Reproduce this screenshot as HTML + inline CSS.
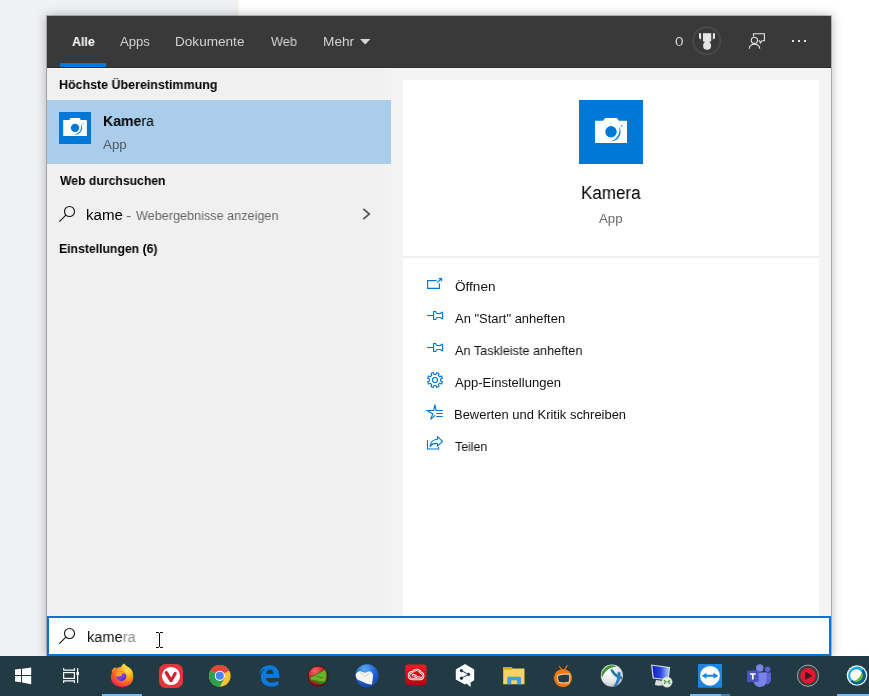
<!DOCTYPE html>
<html lang="de">
<head>
<meta charset="utf-8">
<title>Suche - kamera</title>
<style>
html,body{margin:0;padding:0;}
body{width:869px;height:696px;overflow:hidden;position:relative;background:#ffffff;font-family:"Liberation Sans",sans-serif;color:#000;}
.abs{position:absolute;}
.t{position:absolute;transform-origin:0 50%;will-change:transform;white-space:nowrap;line-height:20px;height:20px;}
#bgleft{left:0;top:0;width:239px;height:656px;background:#f0f1f3;}
#bgline{left:238px;top:0;width:1px;height:16px;background:#f8f8f9;}
#shadow{left:47px;top:16px;width:784px;height:640px;box-shadow:0 0 0 1px rgba(0,0,0,0.22),0 0 10px 1px rgba(0,0,0,0.26);}
#panel{left:47px;top:16px;width:784px;height:600px;background:#f4f4f4;}
#header{left:47px;top:16px;width:784px;height:51px;background:#393939;}
#hline{left:47px;top:67px;width:784px;height:1px;background:#2b2b2b;}
#hline2{left:47px;top:68px;width:784px;height:1px;background:#fafafa;}
#underline{left:60px;top:63px;width:46px;height:4px;background:#0078d7;}
#leftcol{left:47px;top:69px;width:337px;height:547px;background:#f0f0f0;}
#leftstrip{left:384px;top:69px;width:7px;height:547px;background:#f2f2f2;}
#sel{left:47px;top:100px;width:344px;height:64px;background:#a9cdea;}
#card{left:403px;top:80px;width:416px;height:536px;background:#ffffff;}
#divider{left:403px;top:256px;width:416px;height:2px;background:#f0f0f0;}
#search{left:47px;top:616px;width:780px;height:36px;border:2px solid #0a74d6;background:#fff;}
#taskbar{left:0;top:656px;width:869px;height:40px;background:#223a44;}
.tab{color:#d2d2d2;font-size:14.5px;}
.hd{font-weight:bold;font-size:13.5px;color:#000;}
.act{font-size:13.5px;color:#111;}
</style>
</head>
<body>
<div id="bgleft" class="abs"></div>
<div id="bgline" class="abs"></div>
<div id="shadow" class="abs"></div>
<div id="panel" class="abs"></div>
<div id="leftcol" class="abs"></div>
<div id="leftstrip" class="abs"></div>
<div id="header" class="abs"></div>
<div id="hline" class="abs"></div>
<div id="hline2" class="abs"></div>
<div id="underline" class="abs"></div>

<!-- header tabs -->
<span id="t_alle" class="t tab" style="left:72.00px;top:32px;color:#fff;font-weight:bold;font-size:13.1px;transform:scaleX(0.9494);">Alle</span>
<span id="t_apps" class="t tab" style="left:120.00px;top:32px;font-size:13.1px;transform:scaleX(1.0032);">Apps</span>
<span id="t_dok" class="t tab" style="left:175.00px;top:32px;font-size:13.1px;transform:scaleX(1.0371);">Dokumente</span>
<span id="t_web" class="t tab" style="left:271.00px;top:32px;font-size:13.1px;transform:scaleX(0.9737);">Web</span>
<span id="t_mehr" class="t tab" style="left:323.00px;top:32px;font-size:13.1px;transform:scaleX(1.0449);">Mehr</span>
<svg class="abs" style="left:360px;top:39px" width="11" height="6" viewBox="0 0 11 6"><polygon points="0,0 10.4,0 5.2,5.4" fill="#d6d6d6"/></svg>
<span id="t_zero" class="t tab" style="left:675.00px;top:32px;font-size:12.0px;transform:scaleX(1.2753);">0</span>

<!-- left list -->
<span id="t_best" class="t hd" style="left:59.00px;top:75px;font-size:12.8px;transform:scaleX(0.9729);">Höchste Übereinstimmung</span>
<div id="sel" class="abs"></div>
<div id="ico1" class="abs" style="left:59px;top:112px;width:32px;height:32px;background:#0078d7;"></div>
<span id="t_kam1" class="t" style="left:103.00px;top:111px;font-size:15.1px;transform:scaleX(0.9308);"><b>Kame</b>ra</span>
<span id="t_app1" class="t" style="left:103.00px;top:135px;color:#4f5a63;font-size:12.1px;transform:scaleX(1.1068);">App</span>
<span id="t_webd" class="t hd" style="left:60.00px;top:171px;font-size:12.8px;transform:scaleX(0.9537);">Web durchsuchen</span>
<span id="t_kame" class="t" style="left:86.00px;top:205px;font-size:15.1px;transform:scaleX(0.9897);">kame</span>
<span id="t_dash" class="t" style="left:126.00px;top:206px;color:#666;font-size:13.3px;transform:scaleX(1.2222);">-</span>
<span id="t_hint" class="t" style="left:136.00px;top:206px;color:#666;font-size:13.3px;transform:scaleX(0.9505);">Webergebnisse anzeigen</span>
<span id="t_einst" class="t hd" style="left:59.00px;top:239px;font-size:12.8px;transform:scaleX(0.9553);">Einstellungen (6)</span>

<!-- preview card -->
<div id="card" class="abs"></div>
<div id="divider" class="abs"></div>
<div id="ico2" class="abs" style="left:579px;top:100px;width:64px;height:64px;background:#0078d7;"></div>
<span id="t_kam2" class="t" style="left:581.00px;top:183px;font-size:18.0px;transform:scaleX(0.9453);">Kamera</span>
<span id="t_app2" class="t" style="left:599.00px;top:209px;color:#6a6a6a;font-size:12.1px;transform:scaleX(1.0935);">App</span>

<span id="t_a1" class="t act" style="left:455.00px;top:277px;font-size:12.8px;transform:scaleX(1.0602);">Öffnen</span>
<span id="t_a2" class="t act" style="left:455.00px;top:309px;font-size:12.8px;transform:scaleX(1.0129);">An "Start" anheften</span>
<span id="t_a3" class="t act" style="left:455.00px;top:341px;font-size:12.8px;transform:scaleX(0.9911);">An Taskleiste anheften</span>
<span id="t_a4" class="t act" style="left:455.00px;top:373px;font-size:12.8px;transform:scaleX(1.0199);">App-Einstellungen</span>
<span id="t_a5" class="t act" style="left:454.00px;top:405px;font-size:12.8px;transform:scaleX(1.0122);">Bewerten und Kritik schreiben</span>
<span id="t_a6" class="t act" style="left:455.00px;top:437px;font-size:12.8px;transform:scaleX(0.9662);">Teilen</span>

<!-- search box -->
<div id="search" class="abs"></div>
<span id="t_q" class="t" style="left:87.00px;top:627px;color:#111;font-size:15.1px;transform:scaleX(0.9655);">kame<span style="color:#8c8c8c;">ra</span></span>


<!-- icons overlay -->
<svg id="icons" class="abs" style="left:0;top:0" width="869" height="696" viewBox="0 0 869 696">
<defs>
<g id="cam">
<path d="M0 3.4 Q0 2.8 .6 2.8 H8.2 L9.6 .5 Q9.9 0 10.5 0 H21.5 Q22.1 0 22.4 .5 L23.8 2.8 H31.4 Q32 2.8 32 3.4 V24.5 Q32 25.1 31.4 25.1 H.6 Q0 25.1 0 24.5 Z" fill="#fff"/>
<circle cx="16" cy="13.7" r="5.7" fill="#0078d7"/>
<path d="M23.78 8.25 A9.5 9.5 0 0 1 15.17 23.16 A10.96 10.96 0 0 0 23.78 8.25 Z" fill="#0078d7"/>
<circle cx="26.8" cy="8" r=".8" fill="#0078d7"/>
</g>
<g id="mag" fill="none" stroke="#111" stroke-width="1.1">
<circle cx="69.5" cy="211.5" r="5"/><path d="M65.9 215.1 L59.3 221.7"/>
</g>
<g id="pin" fill="none" stroke="#0078d7" stroke-width="1.15">
<path d="M427 315.5 H433.5"/>
<path d="M433.6 311.5 H435.7 Q436 313.4 437.2 313.5 H440.6 L441.6 312.4 H442.6 V318.6 H441.6 L440.6 317.5 H437.2 Q436 317.6 435.7 319.5 H433.6 Z"/>
</g>
</defs>
<!-- camera glyphs -->
<use href="#cam" transform="translate(63.2,118) scale(0.74,0.72)"/>
<use href="#cam" transform="translate(595,118)"/>
<!-- magnifiers -->
<use href="#mag"/>
<use href="#mag" transform="translate(0,422)"/>
<!-- chevron -->
<path d="M363.3 208.8 L369.3 214 L363.3 219.2" fill="none" stroke="#555" stroke-width="1.7"/>
<!-- rewards -->
<circle cx="706.8" cy="40.8" r="13.6" fill="none" stroke="#494949" stroke-width="1.9"/>
<g fill="#e4e4e4">
<rect x="703" y="33.2" width="8.2" height="8.3"/>
<path d="M704.6 41 H709.6 V43 H704.6 Z"/>
<circle cx="707.1" cy="45.7" r="4"/>
<path d="M699 33.2 H701.1 V39.6 L699 38.2 Z"/>
<path d="M712.9 33.2 H715 V38.2 L712.9 39.6 Z"/>
</g>
<!-- feedback -->
<g fill="none" stroke="#e6e6e6" stroke-width="1.1">
<path d="M753.5 36.2 V33.7 H764.4 V40.7 H762 L760.3 43 L759.6 40.7 H758.6"/>
<circle cx="754.4" cy="40.3" r="3.1"/>
<path d="M749.3 48.8 V48.4 A5.2 4.3 0 0 1 759.7 48.4 V48.8"/>
</g>
<!-- dots -->
<g fill="#e0e0e0"><rect x="792" y="40" width="2" height="2"/><rect x="798" y="40" width="2" height="2"/><rect x="804" y="40" width="2" height="2"/></g>
<!-- open -->
<g fill="none" stroke="#0078d7" stroke-width="1.15">
<path d="M436.6 280.6 H427.6 V288.4 H439.4 V283.2"/>
<path d="M437.3 282.7 L441.6 278.6 M438.8 278.6 H441.6 V281.2" stroke-width="1.1"/>
</g>
<!-- pins -->
<use href="#pin"/>
<use href="#pin" transform="translate(0,32)"/>
<!-- gear -->
<g fill="none" stroke="#0078d7" stroke-width="1.15" stroke-linejoin="round">
<path d="M440.61 380.99 L442.41 381.71 L441.45 384.03 L439.67 383.27 L438.27 384.67 L439.03 386.45 L436.71 387.41 L435.99 385.61 L434.01 385.61 L433.29 387.41 L430.97 386.45 L431.73 384.67 L430.33 383.27 L428.55 384.03 L427.59 381.71 L429.39 380.99 L429.39 379.01 L427.59 378.29 L428.55 375.97 L430.33 376.73 L431.73 375.33 L430.97 373.55 L433.29 372.59 L434.01 374.39 L435.99 374.39 L436.71 372.59 L439.03 373.55 L438.27 375.33 L439.67 376.73 L441.45 375.97 L442.41 378.29 L440.61 379.01 Z"/>
<circle cx="435" cy="380" r="2.5"/>
</g>
<!-- star -->
<g fill="none" stroke="#0078d7" stroke-width="1.15">
<path d="M442.8 410.5 H436.1 L434.9 404.6 L433.7 410.5 H427.3 L432.8 413.9 L430.5 419.4 L435 415.4"/>
<path d="M436.2 413.5 H442.8 M436.2 416.5 H442.8"/>
</g>
<!-- share -->
<g fill="none" stroke="#0078d7" stroke-width="1.15" stroke-linejoin="round">
<path d="M427.5 440 V449 H438.6 V447"/>
<path d="M437.5 436.6 L442.5 441.4 L437.5 446.2 V443.5 Q432.5 442.8 430.2 446.4 Q430.6 439.6 437.5 439.2 Z"/>
</g>
<!-- i-beam cursor -->
<g fill="#111"><rect x="159" y="633" width="1" height="14"/><rect x="156" y="632" width="3" height="1"/><rect x="160" y="632" width="3" height="1"/><rect x="156" y="647" width="3" height="1"/><rect x="160" y="647" width="3" height="1"/></g>
</svg>

<!-- taskbar -->
<div id="taskbar" class="abs"></div>

<!-- taskbar icons -->
<svg id="tbicons" class="abs" style="left:0;top:656px" width="869" height="40" viewBox="0 656 869 40">
<defs>
<radialGradient id="gff" cx="0.72" cy="0.18" r="1.0"><stop offset="0" stop-color="#ffe54a"/><stop offset="0.35" stop-color="#ffa21f"/><stop offset="0.65" stop-color="#ff5a2a"/><stop offset="0.85" stop-color="#f5284f"/><stop offset="1" stop-color="#d81b9a"/></radialGradient>
<radialGradient id="gred" cx="0.35" cy="0.25" r="0.8"><stop offset="0" stop-color="#ef6a6a"/><stop offset="0.5" stop-color="#c9242b"/><stop offset="1" stop-color="#8e1015"/></radialGradient>
<radialGradient id="gtb" cx="0.4" cy="0.2" r="0.9"><stop offset="0" stop-color="#5aa8f6"/><stop offset="0.5" stop-color="#2167d6"/><stop offset="1" stop-color="#16389c"/></radialGradient>
<radialGradient id="gac" cx="0.4" cy="0.35" r="0.75"><stop offset="0" stop-color="#ffffff"/><stop offset="0.6" stop-color="#e3e6e8"/><stop offset="1" stop-color="#a9b0b5"/></radialGradient>
<linearGradient id="gcc" x1="0" y1="0" x2="0" y2="1"><stop offset="0" stop-color="#f01a22"/><stop offset="1" stop-color="#b00810"/></linearGradient>
<linearGradient id="grd" x1="0" y1="0" x2="1" y2="0"><stop offset="0" stop-color="#0c1ccf"/><stop offset="0.5" stop-color="#2b48e0"/><stop offset="1" stop-color="#a9c8f7"/></linearGradient>
</defs>
<!-- start -->
<g fill="#ffffff">
<path d="M15 669.6 L21 668.8 V675 H15 Z"/><path d="M22 668.7 L31.2 667.6 V675 H22 Z"/>
<path d="M15 676 H21 V682.2 L15 681.4 Z"/><path d="M22 676 H31.2 V684.2 L22 682.4 Z"/>
</g>
<!-- task view -->
<g fill="none" stroke="#ffffff" stroke-width="1.2">
<rect x="63.6" y="672.6" width="10.8" height="5.8"/>
<path d="M63.6 668 V670.2 H74.4 V668 M63.6 683 V680.8 H74.4 V683 M77.6 668 V683"/>
</g>
<rect x="76.4" y="672" width="2.6" height="3" fill="#fff"/>
<!-- firefox -->
<path d="M120.6 668.4 Q121.4 664.6 124.7 663.5 Q124.9 665.6 127.4 666.6 Q131.8 668.6 133 673.4 L127 674 Z" fill="#ffd83a"/>
<path d="M111.6 671.6 Q112.4 668.2 115.4 667 Q115.4 668.8 117.6 670.2 L114 673.4 Z" fill="#ff9422"/>
<ellipse cx="122.1" cy="677" rx="11.2" ry="10.2" fill="url(#gff)"/>
<circle cx="121.4" cy="676.2" r="4.9" fill="#6f3fe2"/>
<path d="M119.6 680.4 A4.9 4.9 0 0 0 126.2 675.4 Q124 679.6 119.6 680.4 Z" fill="#4a2ab0"/>
<path d="M115.8 673.6 Q118.6 670.6 123 671.6 Q125.4 672.4 125.6 674.2 Q123.6 672.8 121.8 673.8 Q122.6 675.4 121 676.2 L117.2 676.6 Z" fill="#ffa31f"/>
<rect x="102" y="694" width="40" height="2" fill="#76b9ed"/>
<!-- vivaldi -->
<rect x="159" y="664" width="24" height="24" rx="6.5" fill="#e5343b"/>
<circle cx="171" cy="676" r="9.1" fill="#ffffff"/>
<path d="M165 671.4 Q166.6 670.2 167.8 671.8 L170.6 676.8 Q171.2 677.6 171.8 676.6 L173.4 673.4 Q174.2 671.4 176 672 Q177.2 672.8 176.6 674.2 L172.4 681.4 Q171 683 169.6 681.4 L164.8 673.4 Q164.3 672.2 165 671.4 Z" fill="#d8232e"/>
<!-- chrome -->
<circle cx="219.8" cy="675.8" r="10.8" fill="#f7c533"/>
<path d="M219.8 675.8 L210.45 670.4 A10.8 10.8 0 0 1 229.15 670.4 Z" fill="#e0443a"/>
<path d="M210.45 670.4 A10.8 10.8 0 0 1 229.15 670.4 L219.8 670.4 Z" fill="#e0443a"/>
<path d="M219.8 675.8 L210.45 670.4 A10.8 10.8 0 0 0 219.8 686.6 L224.6 678.2 Z" fill="#2ca24c"/>
<circle cx="219.8" cy="675.8" r="5.1" fill="#f4f4f4"/>
<circle cx="219.8" cy="675.8" r="4" fill="#4a86ee"/>
<!-- edge -->
<path d="M259.2 675.2 Q260.2 665.2 269.6 665.2 Q279.4 665.6 279.4 676 V678 H266 Q266.6 682.6 271.6 682.8 Q275.4 682.8 278.4 681 V685 Q275 686.6 270.6 686.5 Q261.2 686 260.8 676.4 Q261.2 671.2 265.6 668.8 Q261 669.8 259.2 675.2 Z M266 674 H273.6 Q273.4 669.6 269.8 669.6 Q266.6 669.8 266 674 Z" fill="#0a7bdc" fill-rule="evenodd"/>
<!-- red sphere w/ green -->
<circle cx="318" cy="676" r="10" fill="url(#gred)" stroke="#4a0a0e" stroke-width="0.9"/>
<path d="M310.6 677 Q314 675.8 317.6 673.8 Q321.6 671.4 325.4 669.6 Q327.6 675 325.6 682 Q321.4 684.6 316.8 682.6 Q313.4 680.6 310.8 680 Q309.8 678.4 310.6 677 Z" fill="#6cb52a" stroke="#2c6412" stroke-width="0.7"/>
<path d="M312.4 679.8 Q316 679.6 318.6 680.8 Q322 682 325.4 680.4 L325.2 682.4 Q321 684.6 316.6 682.4 Z" fill="#3f8418"/>
<path d="M316.6 677 Q318.6 675.6 320 677.4 Q321.4 678.4 322.8 677.2" fill="none" stroke="#2c6412" stroke-width="0.7"/>
<!-- thunderbird -->
<circle cx="367" cy="675.8" r="11.6" fill="url(#gtb)"/>
<path d="M355.6 674.2 Q357.6 671.4 360 671 L364.4 672.8 L369.4 671.2 Q372.8 672 373 676 L372 684.6 Q369 684.4 366.4 683.4 L357.4 679.6 Q355.6 677.4 355.6 674.2 Z" fill="#f6f6f4"/>
<path d="M359.8 672.2 L364.8 676.6 L370.6 672.8" fill="none" stroke="#c3cce0" stroke-width="0.9"/>
<!-- creative cloud -->
<rect x="405.3" y="664.6" width="21.3" height="20.3" rx="3" fill="url(#gcc)"/>
<g fill="none" stroke="#ffffff" stroke-width="2.3" stroke-linecap="round">
<path d="M412.8 679 Q408.9 678.8 408.9 675.4 Q409.1 672.4 412.4 672 Q413.8 669.6 416.8 669.8 Q419.6 670 420.8 672.6 Q423.2 673.4 423.2 675.8 Q423 678.8 420.2 679 Z"/>
<path d="M412.8 675.2 Q414.6 675 416.2 676.6 Q417.8 678.2 419.8 677.6"/>
</g>
<g fill="none" stroke="#d3141c" stroke-width="0.7" stroke-linecap="round">
<path d="M412.8 679 Q408.9 678.8 408.9 675.4 Q409.1 672.4 412.4 672 Q413.8 669.6 416.8 669.8 Q419.6 670 420.8 672.6 Q423.2 673.4 423.2 675.8 Q423 678.8 420.2 679 Z"/>
<path d="M412.8 675.2 Q414.6 675 416.2 676.6 Q417.8 678.2 419.8 677.6"/>
</g>
<!-- deepl -->
<path d="M455.8 669.4 L465 664 L474.2 669.4 V680.2 L470.6 682.4 V687 L466.4 683.6 L465 684.4 L455.8 679.4 Z" fill="#ffffff"/>
<g fill="#12315a" stroke="#12315a" stroke-width="0.9"><circle cx="461.4" cy="670.6" r="1.2"/><circle cx="468.6" cy="674.4" r="1.2"/><circle cx="461.4" cy="678.2" r="1.2"/><path d="M461.4 670.6 L468.6 674.4 L461.4 678.2" fill="none"/></g>
<!-- explorer -->
<path d="M503.2 667 H511.4 L512.6 668.6 H524.5 V684.2 H503.2 Z" fill="#f8d265"/>
<path d="M503.2 667 H511.4 L512.4 668.6 L511 669.8 H503.2 Z" fill="#e5a50f"/>
<path d="M507.3 684.2 V678 Q507.3 676.7 508.6 676.7 H519.7 Q521 676.7 521 678 V684.2 H517 V680.2 H511.3 V684.2 Z" fill="#3f9fe6"/>
<!-- zattoo -->
<path d="M559.2 666 L562.4 670.4 M567.4 665.2 L564.2 670.4" stroke="#f5760a" stroke-width="1.1" fill="none"/>
<circle cx="563" cy="678" r="9.1" fill="#f5760a"/>
<path d="M557.6 675.4 Q563 673.4 569.6 674.2 Q570.4 678.6 569 682.6 Q563.4 683.6 558.6 682.4 Q557 678.8 557.6 675.4 Z" fill="#2a3a44" stroke="#fde6c4" stroke-width="1"/>
<!-- anyconnect -->
<circle cx="611.9" cy="675.6" r="11.1" fill="url(#gac)"/>
<path d="M601.2 675.4 Q602 668.6 609 665.6 Q613 664.4 616.6 666.6 Q608.6 667.4 604.2 673.4 Q603 675 602.6 677 Z" fill="#3f9a35"/>
<path d="M610.4 669.4 Q612.6 668.6 613.6 670.4 Q616.4 675 621.6 676.6 Q622.6 677.8 621.6 679.4 Q615.6 678.2 611.6 672.4 Q610.6 670.8 610.4 669.4 Z" fill="#1f7f9a"/>
<path d="M617.6 671.8 Q619.8 671.4 620.6 673 Q621 680.4 616.4 686 Q614.6 686.6 613.6 686 Q618.2 680 617.6 671.8 Z" fill="#2c7bc8"/>
<!-- remote desktop -->
<path d="M651 664.6 L670.2 667 L668.6 680.6 L652.6 678.4 Z" fill="#cfd6dc"/>
<path d="M652.4 665.8 L669 667.9 L667.6 679.2 L653.8 677.4 Z" fill="url(#grd)"/>
<path d="M656 680 L663 681 L664 684.4 Q660 686.8 654.8 685 Z" fill="#d9dde0"/>
<circle cx="667" cy="682" r="5.2" fill="#e8ebe6" stroke="#b9bdb8" stroke-width="0.6"/>
<path d="M664 680.2 L666 682 L664 683.8 M670 680.2 L668 682 L670 683.8" fill="none" stroke="#2a9a2a" stroke-width="1.2"/>
<!-- teamviewer -->
<rect x="698" y="664" width="24" height="23.7" fill="#1787e8"/>
<circle cx="710" cy="675.8" r="9.9" fill="#ffffff"/>
<path d="M701.6 675.8 L706.6 672.8 V674.8 H713.4 V672.8 L718.4 675.8 L713.4 678.8 V676.8 H706.6 V678.8 Z" fill="#1787e8"/>
<rect x="690" y="694" width="31" height="2" fill="#76b9ed"/><rect x="721" y="694" width="9" height="2" fill="#4e7fa6"/>
<!-- teams -->
<circle cx="759.8" cy="668" r="3.8" fill="#7b83eb"/><circle cx="767.6" cy="669.3" r="2.7" fill="#5b63d3"/>
<path d="M763 672.4 H771 V680 Q770.6 684 766.6 684.4 Z" fill="#5b63d3"/>
<path d="M753.4 672.4 H766.6 V681 Q766 686.6 760 687 Q754 686.6 753.4 681 Z" fill="#7b83eb"/>
<rect x="747" y="670.4" width="11.6" height="11.6" rx="1" fill="#4b53bc"/>
<path d="M749.9 673.2 H755.7 V674.8 H753.7 V679.6 H751.9 V674.8 H749.9 Z" fill="#ffffff"/>
<!-- red play -->
<circle cx="808" cy="675.7" r="10.6" fill="#3b3b3e" stroke="#b5b5b5" stroke-width="0.9"/>
<circle cx="808" cy="675.7" r="7.7" fill="#ea1430"/>
<path d="M805.2 671.6 L812.4 675.7 L805.2 679.8 Z" fill="#2a2226"/>
<!-- webex -->
<circle cx="857" cy="675.5" r="10.3" fill="#f2f6f8"/>
<circle cx="857" cy="675.5" r="8.9" fill="#17a8e0"/>
<path d="M863.3 669.2 A8.9 8.9 0 0 1 850.7 681.8 Z" fill="#0b5d8c"/>
<circle cx="856.4" cy="675.4" r="6.2" fill="#ffffff"/>
<path d="M861.8 672.4 A6.2 6.2 0 0 1 853.6 680.9 Q859.4 679.4 861.8 672.4 Z" fill="#63b532"/>
<rect x="837" y="694" width="32" height="2" fill="#76b9ed"/>
</svg>
</body>
</html>
